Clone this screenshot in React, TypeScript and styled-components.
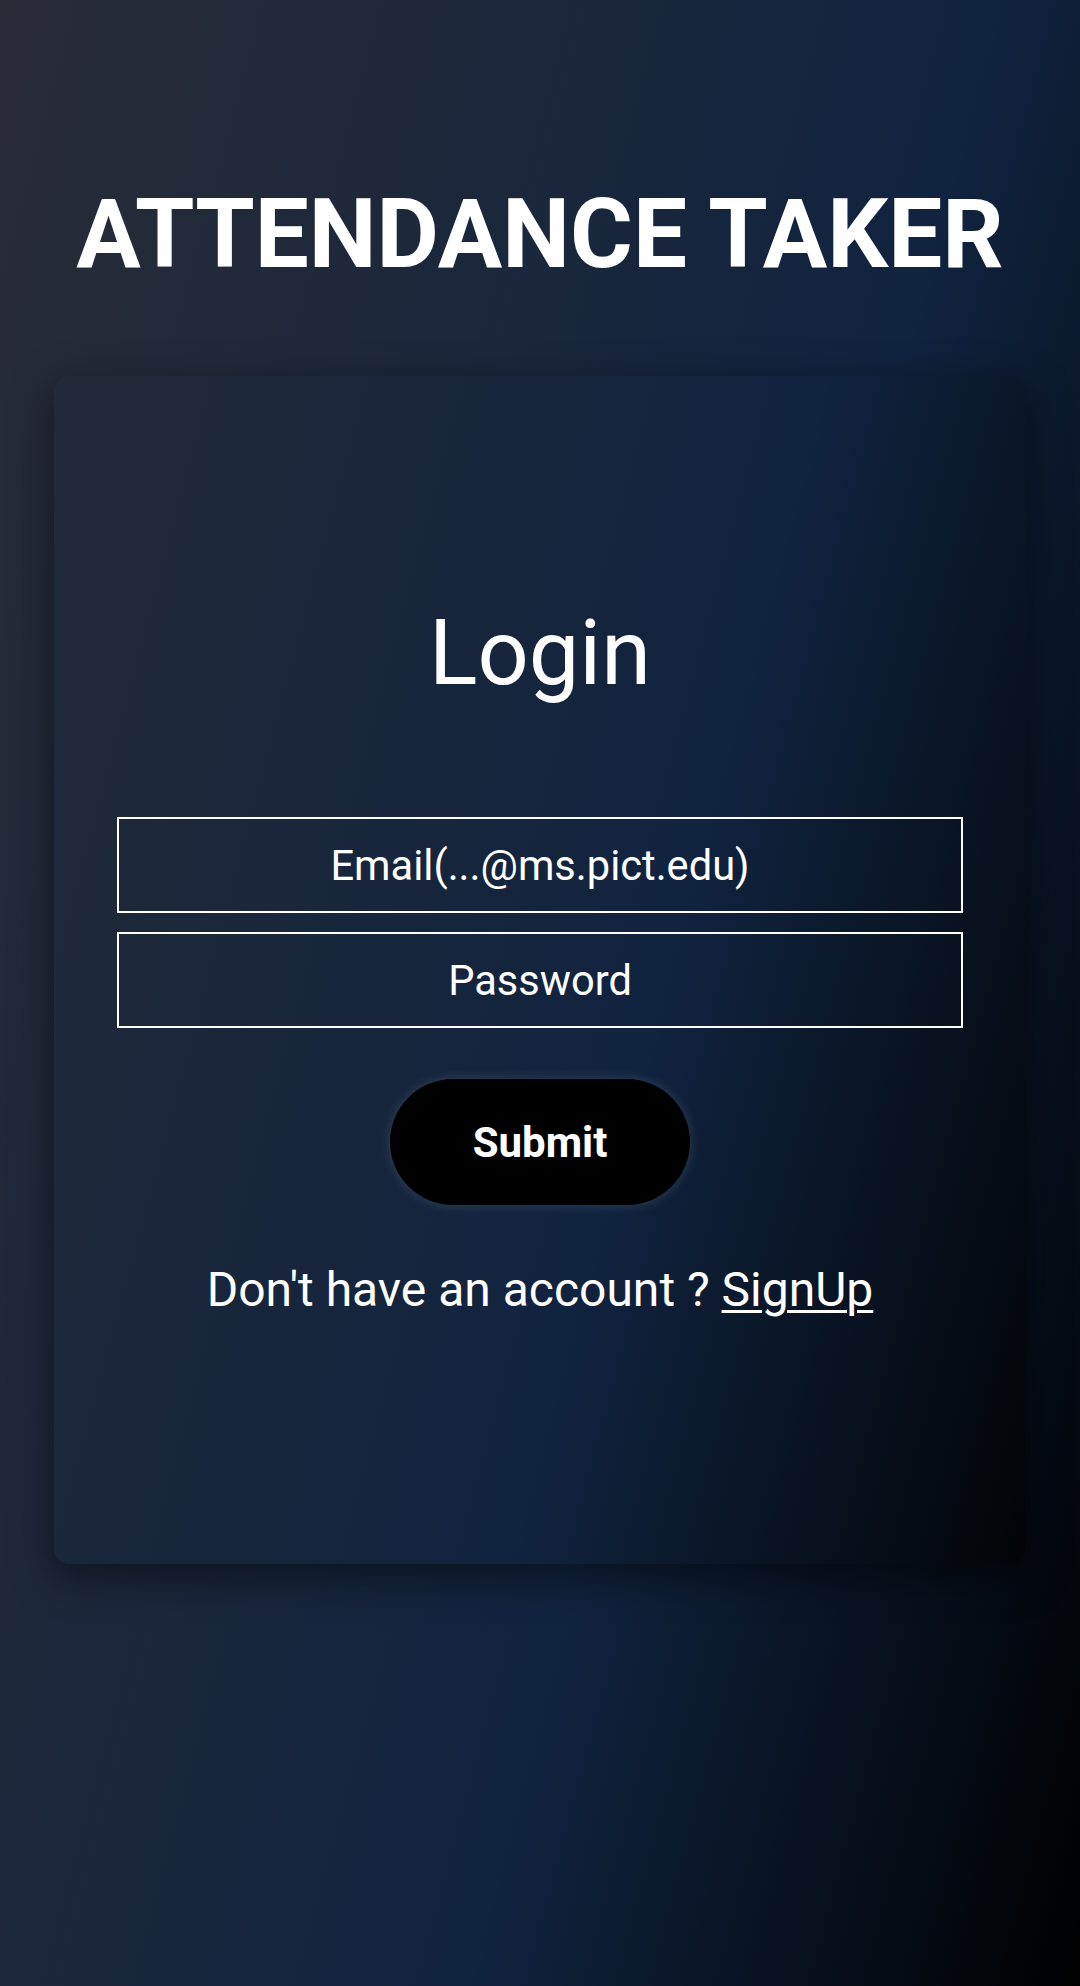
import styled, { createGlobalStyle } from "styled-components";

const GlobalStyle = createGlobalStyle`
  * {
    box-sizing: border-box;
  }
  html, body {
    margin: 0;
    padding: 0;
  }
  body {
    font-family: Roboto, "Liberation Sans", Arial, sans-serif;
    color: #ffffff;
    background: #000;
  }
`;

const Page = styled.div`
  min-height: 1986px;
  width: 100%;
  padding-top: 178px;
  background: linear-gradient(105deg, #292c37 0%, #10233f 62%, #000000 100%);
  display: flex;
  flex-direction: column;
  align-items: center;
`;

const Title = styled.h1`
  margin: 0;
  font-size: 96px;
  font-weight: 700;
  line-height: normal;
  color: #ffffff;
  text-align: center;
`;

const Card = styled.form`
  margin-top: 86px;
  width: 972px;
  padding: 225px 63px 246px;
  border-radius: 16px;
  background: linear-gradient(105deg, #222a38 0%, #10233f 60%, #020406 100%);
  box-shadow: 0 12px 40px rgba(0, 0, 0, 0.5);
  display: flex;
  flex-direction: column;
  align-items: center;
`;

const Heading = styled.h2`
  margin: 0 0 111px;
  font-size: 90px;
  font-weight: 400;
  line-height: normal;
`;

const Fields = styled.div`
  width: 100%;
  display: flex;
  flex-direction: column;
  gap: 19px;
`;

const Field = styled.input`
  width: 100%;
  height: 96px;
  border: 2px solid #ffffff;
  background: transparent;
  color: #ffffff;
  font-family: Roboto, "Liberation Sans", Arial, sans-serif;
  font-size: 41.6px;
  text-align: center;
  outline: none;
  &::placeholder {
    color: #ffffff;
    opacity: 1;
  }
`;

const SubmitButton = styled.button`
  margin-top: 51px;
  width: 300px;
  height: 126px;
  border: 0;
  border-radius: 63px;
  background: #000000;
  color: #ffffff;
  font-family: Roboto, "Liberation Sans", Arial, sans-serif;
  font-size: 42px;
  font-weight: 700;
  box-shadow: 0 0 12px rgba(200, 210, 230, 0.18);
  cursor: pointer;
`;

const Footer = styled.p`
  margin: 56px 0 0;
  font-size: 48px;
  line-height: normal;
  white-space: nowrap;
`;

const SignUpLink = styled.a`
  color: #ffffff;
  text-decoration: underline;
  text-underline-offset: 4px;
  text-decoration-thickness: 3px;
`;

export default function App() {
  return (
    <>
      <GlobalStyle />
      <Page>
        <Title>ATTENDANCE TAKER</Title>
        <Card onSubmit={(e) => e.preventDefault()}>
          <Heading>Login</Heading>
          <Fields>
            <Field type="email" placeholder="Email(...@ms.pict.edu)" />
            <Field type="password" placeholder="Password" />
          </Fields>
          <SubmitButton type="submit">Submit</SubmitButton>
          <Footer>
            Don't have an account ? <SignUpLink href="#">SignUp</SignUpLink>
          </Footer>
        </Card>
      </Page>
    </>
  );
}
